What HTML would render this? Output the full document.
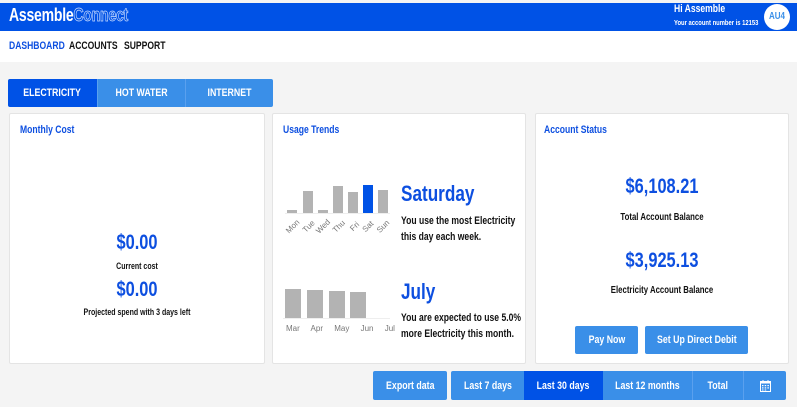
<!DOCTYPE html>
<html><head><meta charset="utf-8"><style>
*{margin:0;padding:0;box-sizing:border-box}
body{width:797px;height:407px;overflow:hidden;background:#f4f4f4;font-family:"Liberation Sans",sans-serif;font-weight:bold;position:relative;color:#111}
.a{position:absolute;white-space:nowrap}
.L{transform:scaleX(.78);transform-origin:0 0}
.C{transform:scaleX(.78);transform-origin:50% 0}
.c{text-align:center}
.hdr{left:0;top:3px;width:797px;height:28px;background:#0052e6}
.nav{left:0;top:31px;width:797px;height:31px;background:#fff}
.card{background:#fff;border:1px solid #e4e4e4;border-radius:2px}
.ttl{color:#0d4fe0;font-size:11px}
.btn{background:#3a8fe8;color:#fff;font-size:11px;display:flex;align-items:center;justify-content:center;border-radius:2px}
.btn span{display:inline-block;transform:scaleX(.8)}
.big{color:#0d4fe0;font-size:21px}
.bar{background:#b3b3b3;position:absolute;bottom:0}
.lbl{color:#777;font-weight:normal;font-size:8px}
</style></head><body>
<div class="a hdr"></div>
<div class="a L" style="left:9px;top:5px;font-size:18px;color:#fff;letter-spacing:-0.3px">Assemble<span style="color:#0052e6;-webkit-text-stroke:0.7px #cfe0ff">Connect</span></div>
<div class="a L" style="left:674px;top:3px;font-size:11px;color:#fff">Hi Assemble</div>
<div class="a L" style="left:674px;top:18px;font-size:7.5px;color:#fff">Your account number is 12153</div>
<div class="a c" style="left:764px;top:4px;width:26px;height:26px;border-radius:50%;background:#fff;color:#3a8fe8;font-size:10px;line-height:26px"><span style="display:inline-block;transform:scaleX(.8)">AU4</span></div>
<div class="a nav"></div>
<div class="a L" style="left:9px;top:40px;font-size:11px;color:#0d4fe0">DASHBOARD</div>
<div class="a L" style="left:69px;top:40px;font-size:11px">ACCOUNTS</div>
<div class="a L" style="left:124px;top:40px;font-size:11px">SUPPORT</div>
<div class="a btn" style="left:8px;top:79px;width:89px;height:28px;background:#0052e6;border-radius:2px 0 0 2px"><span>ELECTRICITY</span></div>
<div class="a btn" style="left:97px;top:79px;width:88px;height:28px;border-radius:0;border-left:1px solid #5aa0ee"><span>HOT WATER</span></div>
<div class="a btn" style="left:185px;top:79px;width:88px;height:28px;border-radius:0 2px 2px 0;border-left:1px solid #5aa0ee"><span>INTERNET</span></div>

<div class="a card" style="left:9px;top:113px;width:256px;height:251px"></div>
<div class="a ttl L" style="left:20px;top:124px">Monthly Cost</div>
<div class="a c big C" style="left:9px;top:231px;width:256px">$0.00</div>
<div class="a c C" style="left:9px;top:261px;width:256px;font-size:9px">Current cost</div>
<div class="a c big C" style="left:9px;top:278px;width:256px">$0.00</div>
<div class="a c C" style="left:9px;top:307px;width:256px;font-size:9px">Projected spend with 3 days left</div>

<div class="a card" style="left:272px;top:113px;width:254px;height:251px"></div>
<div class="a ttl L" style="left:283px;top:124px">Usage Trends</div>
<div class="a" style="left:285px;top:185px;width:105px;height:29px;border-bottom:1px solid #eee">
<div class="bar" style="left:2px;width:10px;height:3px"></div>
<div class="bar" style="left:18px;width:10px;height:22px"></div>
<div class="bar" style="left:33px;width:10px;height:3px"></div>
<div class="bar" style="left:48px;width:10px;height:27px"></div>
<div class="bar" style="left:63px;width:10px;height:21px"></div>
<div class="bar" style="left:78px;width:10px;height:28px;background:#0052e6"></div>
<div class="bar" style="left:93px;width:10px;height:23px"></div>
</div>
<div class="a lbl" style="left:285px;top:222px;width:110px">
<span class="a" style="left:0;transform:rotate(-45deg)">Mon</span><span class="a" style="left:17px;transform:rotate(-45deg)">Tue</span><span class="a" style="left:30px;transform:rotate(-45deg)">Wed</span><span class="a" style="left:47px;transform:rotate(-45deg)">Thu</span><span class="a" style="left:65px;transform:rotate(-45deg)">Fri</span><span class="a" style="left:77px;transform:rotate(-45deg)">Sat</span><span class="a" style="left:91px;transform:rotate(-45deg)">Sun</span></div>
<div class="a L" style="left:401px;top:181px;font-size:22px;color:#0d4fe0">Saturday</div>
<div class="a L" style="left:401px;top:213px;font-size:11px;line-height:16px">You use the most Electricity<br>this day each week.</div>
<div class="a" style="left:283px;top:289px;width:107px;height:30px;border-bottom:1px solid #eee">
<div class="bar" style="left:2px;width:16px;height:29px"></div>
<div class="bar" style="left:24px;width:16px;height:28px"></div>
<div class="bar" style="left:46px;width:16px;height:27px"></div>
<div class="bar" style="left:67px;width:16px;height:26px"></div>
</div>
<div class="a lbl" style="left:286px;top:324px;word-spacing:9px">Mar Apr May Jun Jul</div>
<div class="a L" style="left:401px;top:279px;font-size:22px;color:#0d4fe0">July</div>
<div class="a L" style="left:401px;top:310px;font-size:11px;line-height:16px">You are expected to use 5.0%<br>more Electricity this month.</div>

<div class="a card" style="left:535px;top:113px;width:254px;height:251px"></div>
<div class="a ttl L" style="left:544px;top:124px">Account Status</div>
<div class="a c big C" style="left:535px;top:175px;width:254px">$6,108.21</div>
<div class="a c C" style="left:535px;top:212px;width:254px;font-size:10px">Total Account Balance</div>
<div class="a c big C" style="left:535px;top:249px;width:254px">$3,925.13</div>
<div class="a c C" style="left:535px;top:285px;width:254px;font-size:10px">Electricity Account Balance</div>
<div class="a btn" style="left:575px;top:326px;width:63px;height:28px"><span>Pay Now</span></div>
<div class="a btn" style="left:645px;top:326px;width:103px;height:28px"><span>Set Up Direct Debit</span></div>

<div class="a btn" style="left:373px;top:371px;width:74px;height:29px"><span>Export data</span></div>
<div class="a btn" style="left:451px;top:371px;width:74px;height:29px;border-radius:2px 0 0 2px"><span>Last 7 days</span></div>
<div class="a btn" style="left:524px;top:371px;width:79px;height:29px;background:#0052e6;border-radius:0"><span>Last 30 days</span></div>
<div class="a btn" style="left:603px;top:371px;width:89px;height:29px;border-radius:0"><span>Last 12 months</span></div>
<div class="a btn" style="left:692px;top:371px;width:51px;height:29px;border-radius:0;border-left:1px solid #5aa0ee"><span>Total</span></div>
<div class="a btn" style="left:743px;top:371px;width:43px;height:29px;border-radius:0 2px 2px 0;border-left:1px solid #5aa0ee">
<svg width="11" height="12" viewBox="0 0 11 12"><rect x="0.5" y="1.5" width="10" height="10" fill="none" stroke="#fff"/><rect x="0.5" y="1.5" width="10" height="2" fill="#fff"/><g fill="#fff"><rect x="2" y="5" width="1.5" height="1.2"/><rect x="4.7" y="5" width="1.5" height="1.2"/><rect x="7.4" y="5" width="1.5" height="1.2"/><rect x="2" y="7.3" width="1.5" height="1.2"/><rect x="4.7" y="7.3" width="1.5" height="1.2"/><rect x="7.4" y="7.3" width="1.5" height="1.2"/><rect x="2" y="9.5" width="1.5" height="1"/><rect x="4.7" y="9.5" width="1.5" height="1"/></g><rect x="2.5" y="0" width="1" height="2" fill="#fff"/><rect x="7.5" y="0" width="1" height="2" fill="#fff"/></svg></div>
</body></html>
